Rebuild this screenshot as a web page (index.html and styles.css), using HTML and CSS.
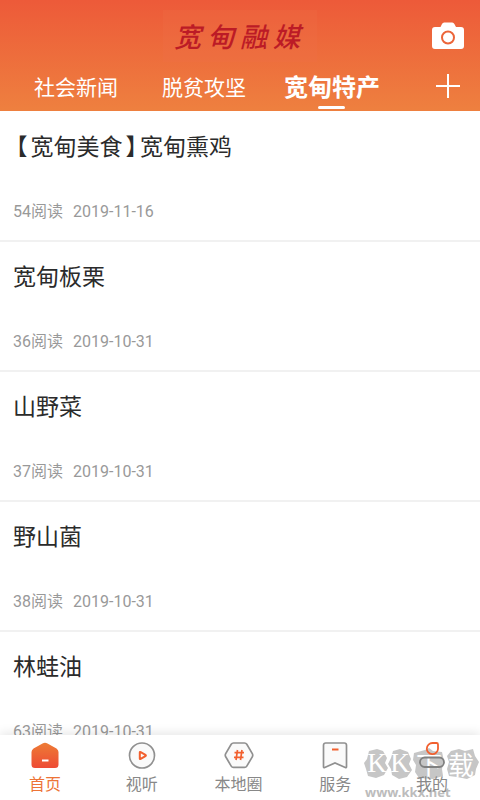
FILE: index.html
```html
<!DOCTYPE html>
<html lang="zh-CN">
<head>
<meta charset="utf-8">
<meta name="viewport" content="width=device-width, initial-scale=1">
<title>宽甸融媒</title>
<link rel="stylesheet" href="styles.css">
</head>
<body>
<header class="header">
  <div class="topbar">
    <h1 class="logo"><span>宽</span><span>甸</span><span>融</span><span>媒</span></h1>
    <button class="icon-button camera" type="button" aria-label="拍照">
      <svg width="32" height="28" viewBox="0 0 32 28">
        <path fill="#fff" d="M3 5h5.500l1.500-3q.7-1.500 2.200-1.500h8q1.500 0 2.200 1.500L24 5h5q3 0 3 3v16q0 3-3 3H3q-3 0-3-3V8q0-3 3-3z"/>
        <circle cx="16" cy="15.500" r="6" fill="#fff" stroke="#ec6539" stroke-width="2"/>
      </svg>
    </button>
  </div>
  <nav class="tabs">
    <a class="tab" href="#society">社会新闻</a>
    <a class="tab" href="#poverty">脱贫攻坚</a>
    <a class="tab active" href="#local" aria-current="page">宽甸特产</a>
    <button class="icon-button plus" type="button" aria-label="添加">
      <svg width="24" height="24" viewBox="0 0 24 24"><path d="M12 0v24M0 12h24" stroke="#fff" stroke-width="2"/></svg>
    </button>
  </nav>
</header>
<main class="feed">
  <article class="item"><h2 class="title"><span class="bracket">【</span>宽甸美食<span class="bracket">】</span>宽甸熏鸡</h2><p class="meta"><span>54阅读</span><time>2019-11-16</time></p></article>
  <article class="item"><h2 class="title">宽甸板栗</h2><p class="meta"><span>36阅读</span><time>2019-10-31</time></p></article>
  <article class="item"><h2 class="title">山野菜</h2><p class="meta"><span>37阅读</span><time>2019-10-31</time></p></article>
  <article class="item"><h2 class="title">野山菌</h2><p class="meta"><span>38阅读</span><time>2019-10-31</time></p></article>
  <article class="item"><h2 class="title">林蛙油</h2><p class="meta"><span>63阅读</span><time>2019-10-31</time></p></article>
</main>
<footer class="bottom">
  <div class="watermark">
    <svg class="blobs" width="116" height="32" viewBox="0 0 116 32">
      <path d="M5 3l8-2 6 2 4 7-2 5 3 5-4 7-8 3-8-2-2-7-2-6 3-4z"/>
      <path d="M29 3l7-2 8 3 3 7-2 5 3 6-5 7-8 2-7-4-1-6-3-5 3-6z"/>
      <path d="M50 5l11-3 4-2 4 3 9 1 2 9-2 8 1 7-10 3-14-1-4-6 1-7-3-5z"/>
      <path d="M87 3l8-2 6 2 8-2 2 7 4 6-3 7-1 6-8 4-10-2-8-1-2-7 2-7-2-6z"/>
    </svg>
    <div class="mark"><span>K</span><span>K</span><span class="han">下</span><span class="han">载</span></div>
    <div class="site">www.kkx.net</div>
  </div>
  <nav class="bottom-nav">
    <a class="nav-item current" href="#home">
      <svg width="30" height="28" viewBox="0 0 30 28">
        <defs><linearGradient id="home" x1="0" y1="0" x2="0" y2="1"><stop offset="0" stop-color="#ed7c35"/><stop offset="1" stop-color="#ee4b35"/></linearGradient></defs>
        <path fill="url(#home)" d="M12.500 1.500Q15 0 17.500 1.500l9 5Q28.500 8 28.500 10v12.500q0 3.500-3.500 3.500H5q-3.500 0-3.500-3.500V10q0-2 2-3.500z"/>
        <path d="M12 18.500h6.500" stroke="#fff" stroke-width="2"/>
      </svg>首页</a>
    <a class="nav-item" href="#video">
      <svg width="30" height="28" viewBox="0 0 30 28" fill="none">
        <circle cx="15" cy="13.500" r="12.500" fill="#fafafa" stroke="#909090" stroke-width="1.700"/>
        <path d="M12.800 10.500q0-.9.900-.4l4.700 2.700q1 .7 0 1.400l-4.700 2.700q-.9.500-.9-.4z" stroke="#f2602f" stroke-width="2"/>
      </svg>视听</a>
    <a class="nav-item" href="#circle">
      <svg width="30" height="28" viewBox="0 0 30 28" fill="none">
        <path d="M9.500 1h11q1.500 0 2.300 1.300l5.500 9.300q.9 1.600 0 3.200l-5.500 9.300q-.8 1.300-2.300 1.300h-11q-1.500 0-2.300-1.300l-5.500-9.300q-.9-1.600 0-3.200l5.500-9.300q.8-1.300 2.300-1.300z" fill="#fafafa" stroke="#909090" stroke-width="1.700"/>
        <path d="M13.500 8l-1.500 10M18 8l-1.500 10M10.500 10.700h9.500M10 15.300h9.500" stroke="#f2602f" stroke-width="1.700"/>
      </svg>本地圈</a>
    <a class="nav-item" href="#service">
      <svg width="30" height="28" viewBox="0 0 30 28" fill="none">
        <path d="M5.800 1h18.400q2.300 0 2.300 2.300v21.500q0 1.200-1.200.7L15 21 4.700 25.500q-1.200.5-1.200-.7V3.300q0-2.300 2.300-2.300z" fill="#fafafa" stroke="#909090" stroke-width="1.700"/>
        <path d="M12 7.500h6.500" stroke="#f2602f" stroke-width="2"/>
      </svg>服务</a>
    <a class="nav-item" href="#me">
      <svg width="30" height="28" viewBox="0 0 30 28" fill="none">
        <path d="M15.500 1h4q1.500 0 1.500 1.500v4.500a5.600 5.600 0 1 1-5.500-6z" stroke="#f2602f" stroke-width="1.800"/>
        <rect x="3" y="15.500" width="24" height="9.500" rx="4.700" stroke="#808080" stroke-width="1.800"/>
      </svg>我的</a>
  </nav>
</footer>
</body>
</html>
```
FILE: styles.css
```css
* { box-sizing: border-box; }
body {
  margin: 0;
  height: 100vh;
  display: flex;
  flex-direction: column;
  overflow: hidden;
  background: #fff;
  font-family: Roboto, "Noto Sans CJK SC", sans-serif;
}
h1, h2, p { margin: 0; font-weight: 400; }
a { color: inherit; text-decoration: none; }
svg { display: block; flex: none; }
.header {
  flex: none;
  color: #fff;
  background: linear-gradient(#ed5a39, #ee803f);
}
.topbar {
  position: relative;
  display: flex;
  justify-content: center;
  height: 64px;
  padding-top: 10px;
}
.logo {
  display: flex;
  align-items: center;
  gap: 6px;
  height: 52px;
  padding: 0 17px 0 11px;
  background: rgba(240, 110, 70, 0.25);
  color: #bc1b26;
  font: italic 500 27px/52px "Noto Sans CJK SC", sans-serif;
}
.icon-button {
  padding: 0;
  border: 0;
  background: none;
}
.camera {
  position: absolute;
  right: 16px;
  top: 22px;
}
.tabs {
  display: grid;
  grid-template-columns: repeat(3, 1fr) 64px;
  align-items: center;
  height: 47px;
  padding: 0 20px 0 12px;
}
.tab {
  position: relative;
  font-size: 21px;
  line-height: 46px;
  text-align: center;
}
.tab.active {
  font-size: 24px;
  font-weight: 700;
}
.tab.active::after {
  content: "";
  position: absolute;
  left: 50%;
  bottom: 2px;
  width: 27px;
  height: 3px;
  margin-left: -14px;
  border-radius: 2px;
  background: #fff;
}
.plus {
  justify-self: end;
  margin-bottom: 4px;
}
.feed {
  flex: 1;
  min-height: 0;
  padding-top: 1px;
  overflow: hidden;
}
.item {
  height: 130px;
  padding: 20px 13px 0;
  border-bottom: 2px solid #f1f1f1;
}
.title {
  height: 32px;
  color: #2b2b2b;
  font-size: 23px;
  line-height: 32px;
}
.bracket {
  padding: 0 3px;
  font-feature-settings: "halt";
}
.meta {
  display: flex;
  gap: 10px;
  margin-top: 36px;
  color: #999;
  font-size: 16px;
  line-height: 24px;
}
.bottom {
  position: relative;
  flex: none;
  background: #fff;
  box-shadow: 0 -2px 10px rgba(0, 0, 0, 0.1);
}
.bottom-nav {
  position: relative;
  display: flex;
  justify-content: space-between;
  height: 65px;
  padding: 7px 8px 0 5px;
}
.nav-item {
  display: flex;
  flex-direction: column;
  align-items: center;
  width: 80px;
  color: #888;
  font-size: 16px;
  line-height: 30px;
}
.current { color: #ed7437; }
.watermark {
  position: absolute;
  right: 0;
  top: 13px;
  width: 116px;
}
.blobs { fill: #c6c6c6; }
.mark {
  position: absolute;
  left: 2px;
  top: 0;
  display: grid;
  grid-template-columns: 22px 24px 34px 30px;
  color: #fff;
  font: 27px/30px "Liberation Serif", serif;
  text-align: center;
}
.han { font: 26px/32px "Noto Sans CJK SC", sans-serif; }
.site {
  margin-top: 4px;
  padding-left: 1px;
  color: #bcbcbc;
  font: 700 13px/16px "Noto Sans", sans-serif;
}
```
